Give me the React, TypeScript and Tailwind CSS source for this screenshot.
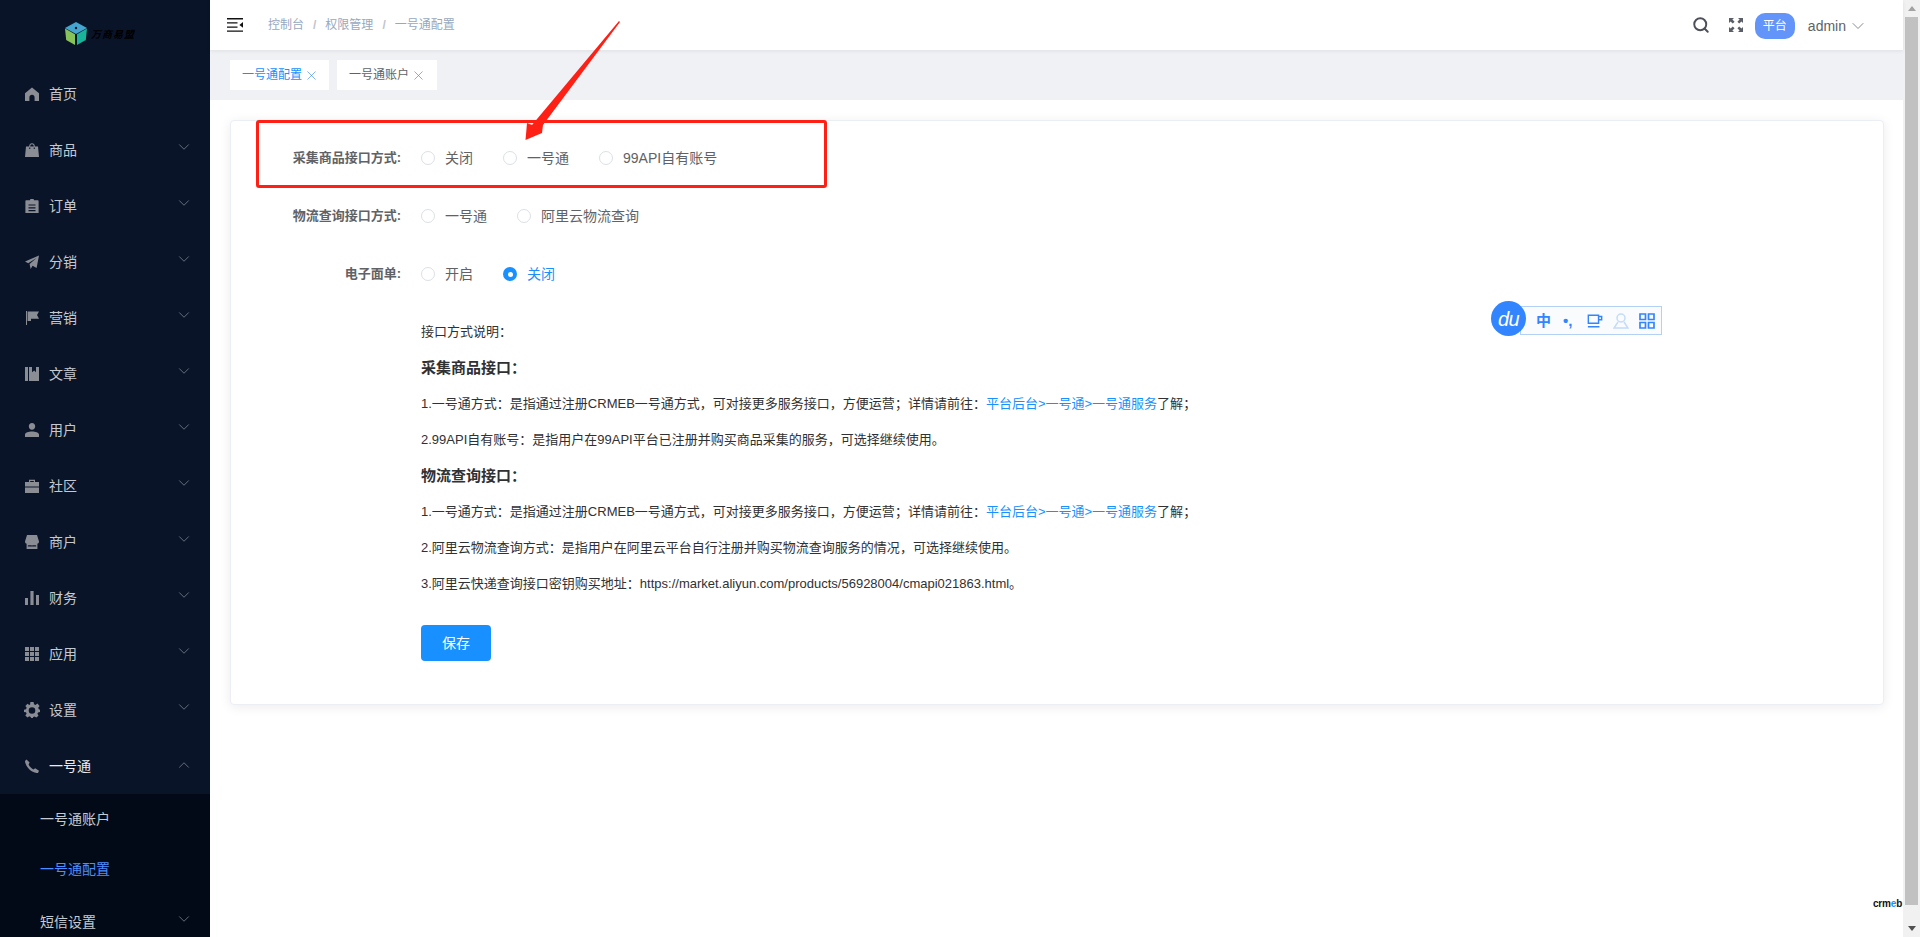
import { ChevronDown, ChevronUp, Search, X } from 'lucide-react';
import type { ReactNode } from 'react';

const icon = (children: ReactNode) => (
  <svg viewBox="0 0 14 14" className="h-[14px] w-[14px] shrink-0" fill="#8b8d95">
    {children}
  </svg>
);

const menu: { label: string; icon: ReactNode; arrow?: boolean }[] = [
  { label: '首页', icon: icon(<path d="M7 0.5 14 6.2V14H9.6V10.5C9.6 8.8 8.5 7.8 7 7.8S4.4 8.8 4.4 10.5V14H0V6.2Z" />) },
  {
    label: '商品',
    arrow: true,
    icon: icon(<path d="M4.2 3.6V3C4.2 1.3 5.4.2 7 .2S9.8 1.3 9.8 3V3.6H13L14 14H0L1 3.6ZM5.3 3.6H8.7V3C8.7 2 8 1.3 7 1.3S5.3 2 5.3 3ZM4.2 4.6V6H5.3V4.6ZM8.7 4.6V6H9.8V4.6Z" fillRule="evenodd" />),
  },
  {
    label: '订单',
    arrow: true,
    icon: icon(<path d="M5 1.2C5 .5 5.5 0 6 0H8C8.5 0 9 .5 9 1.2H12.6C13.2 1.2 13.6 1.6 13.6 2.2V14H.4V2.2C.4 1.6.8 1.2 1.4 1.2ZM3.5 5.4V6.6H10.5V5.4ZM3.5 8.2V9.4H10.5V8.2ZM3.5 11V12.2H10.5V11Z" fillRule="evenodd" />),
  },
  { label: '分销', arrow: true, icon: icon(<path d="M14 .4 11.6 13 7.6 10.7 5.6 14 4.6 9 11.5 3 3.2 8.2 0 6.4Z" />) },
  { label: '营销', arrow: true, icon: icon(<path d="M1 0H2V14H1ZM2.6.6H14L12 4 14 7.8H6V10H2.6Z" />) },
  { label: '文章', arrow: true, icon: icon(<path d="M0 0H3V14H0ZM4 0H7V5.2L9.2 3.6 11 5.2V0H14V14H4Z" />) },
  { label: '用户', arrow: true, icon: icon(<path d="M7 0C8.9 0 10.2 1.4 10.2 3.3S8.9 6.8 7 6.8 3.8 5.2 3.8 3.3 5.1 0 7 0ZM7 8.4C10.4 8.4 14 9.6 14 11.6V14H0V11.6C0 9.6 3.6 8.4 7 8.4Z" />) },
  {
    label: '社区',
    arrow: true,
    icon: icon(<path d="M4 3V.8H10V3H14V7.4H0V3ZM5.2 3H8.8V1.9H5.2ZM0 8.4H14V14H0Z" fillRule="evenodd" />),
  },
  {
    label: '商户',
    arrow: true,
    icon: icon(<path d="M2 0H12L14 6.6C14 8 13 8.8 12.4 8.8V14H1.6V8.8C1 8.8 0 8 0 6.6ZM2.8 10.6 2.8 11.6H11.2V10.6C9.6 9.8 8.6 10.4 7 10.4S4.4 9.8 2.8 10.6Z" fillRule="evenodd" />),
  },
  { label: '财务', arrow: true, icon: icon(<path d="M0 7H3V14H0ZM5.4 0H8.6V14H5.4ZM11 4H14V14H11Z" />) },
  {
    label: '应用',
    arrow: true,
    icon: icon(<path d="M0 0H4V4H0ZM5 0H9V4H5ZM10 0H14V4H10ZM0 5H4V9H0ZM5 5H9V9H5ZM10 5H14V9H10ZM0 10H4V14H0ZM5 10H9V14H5ZM10 10H14V14H10Z" />),
  },
  {
    label: '设置',
    arrow: true,
    icon: (
      <svg viewBox="0 0 16 16" className="ml-[-1px] h-4 w-4 shrink-0 mr-[-1px]" fill="#8b8d95">
        <path
          fillRule="evenodd"
          d="M6.4 0H9.6L10 2.2 11.5 2.9 13.4 1.6 15.6 4 14.2 5.8 14.8 7.3 16 7.7V10L14 10.4 13.4 11.8 14.5 13.7 12.3 15.6 10.5 14.4 9.2 15 8.9 16H7.1L6.7 15 5.3 14.3 3.5 15.6 1.3 13.6 2.6 11.7 2 10.3 0 10V7.7L2 7.3 2.7 5.8 1.4 4 3.5 1.7 5.3 2.9 6.1 2.4ZM8 5.2A3.3 3.3 0 1 0 8 11.8 3.3 3.3 0 1 0 8 5.2Z"
        />
      </svg>
    ),
  },
];

const Radio = ({ label, checked }: { label: string; checked?: boolean }) => (
  <label className={`mr-[30px] flex items-center text-[14px] ${checked ? 'text-[#1890ff]' : 'text-[#606266]'}`}>
    {checked ? (
      <span className="mr-[10px] flex h-[14px] w-[14px] items-center justify-center rounded-full bg-[#1890ff]">
        <span className="h-[5px] w-[5px] rounded-full bg-white" />
      </span>
    ) : (
      <span className="mr-[10px] h-[14px] w-[14px] rounded-full border border-[#dcdfe6] bg-white" />
    )}
    {label}
  </label>
);

const FormRow = ({ label, children }: { label: string; children: ReactNode }) => (
  <div className="flex h-[58px] items-center">
    <div className="w-[170px] text-right text-[13px] font-bold text-[#606266]">{label}</div>
    <div className="ml-5 flex items-center">{children}</div>
  </div>
);

const Line = ({ children, bold }: { children: ReactNode; bold?: boolean }) => (
  <div className={`flex h-9 items-center ${bold ? 'text-[15px] font-bold text-[#303133]' : 'text-[13px] text-[#303133]'}`}>
    <span>{children}</span>
  </div>
);

const Arrow = () => <ChevronDown className="mb-[6px] h-[18px] w-[18px] text-[#6f7683]" strokeWidth={1.2} />;

const servicesLink = <span className="text-[#1890ff]">平台后台&gt;一号通&gt;一号通服务</span>;

// fullwidth punctuation used in the description text
const colon = '\uFF1A';
const comma = '\uFF0C';
const semi = '\uFF1B';

const serviceLine = (
  <Line>
    1.一号通方式{colon}是指通过注册CRMEB一号通方式{comma}可对接更多服务接口{comma}方便运营{semi}详情请前往{colon}
    {servicesLink}了解{semi}
  </Line>
);

export default function App() {
  return (
    <div className="relative flex h-[937px] w-[1920px] overflow-hidden bg-white font-['Liberation_Sans','Noto_Sans_CJK_SC',sans-serif]">
      {/* sidebar */}
      <aside className="flex w-[210px] shrink-0 flex-col bg-[#0a1429]">
        <div className="flex h-[66px] shrink-0 items-start pl-[65px] pt-[22px]">
          <svg viewBox="0 0 22 23" className="h-[23px] w-[22px]">
            <path d="M11 0 22 6 11 12 0 6Z" fill="#44a5cf" />
            <path d="M0 6.5 10 12.2V23L1.2 18Z" fill="#86c35a" />
            <path d="M22 6.5 12 12.2V23L20.8 18Z" fill="#19b39a" />
            <circle cx="11" cy="6" r="1.2" fill="#0a1429" />
          </svg>
          <span className="ml-1 mt-[5px] whitespace-nowrap text-[10px] font-bold italic tracking-[1px] text-black">万商易盟</span>
        </div>
        {menu.map((m) => (
          <div key={m.label} className="flex h-14 shrink-0 items-center pl-[25px] pr-[17px] text-[14px] text-[#c5cad1]">
            {m.icon}
            <span className="ml-[10px] flex-1">{m.label}</span>
            {m.arrow && <Arrow />}
          </div>
        ))}
        <div className="flex h-14 shrink-0 items-center pl-[25px] pr-[17px] text-[14px] text-[#e8ebef]">
          {icon(<path d="M1.5 0.5 4.6 3.6 3.6 5.6C4.4 7.4 6.4 9.6 8.4 10.4L10.2 9.2 14 11.8 13 14C7 14.5 .2 7.5 0 2Z" />)}
          <span className="ml-[10px] flex-1">一号通</span>
          <ChevronUp className="mb-[2px] h-[18px] w-[18px] text-[#6f7683]" strokeWidth={1.2} />
        </div>
        <div className="flex-1 bg-[#030a17] text-[14px] text-[#c5cad1]">
          <div className="flex h-[50px] items-center pl-10">一号通账户</div>
          <div className="flex h-[50px] items-center pl-10 text-[#4c8dff]">一号通配置</div>
          <div className="flex h-14 items-center pl-10 pr-[17px]">
            <span className="flex-1">短信设置</span>
            <Arrow />
          </div>
        </div>
      </aside>

      {/* main */}
      <main className="flex min-w-0 flex-1 flex-col">
        <header className="relative z-10 flex h-[50px] shrink-0 items-center bg-white pl-[17px] pr-[35px] shadow-[0_1px_4px_rgba(0,21,41,0.08)]">
          <svg viewBox="0 0 16 14" className="h-[14px] w-4">
            <path d="M0 0H16V1.4H0ZM0 4.2H10.5V5.6H0ZM0 8.4H10.5V9.8H0ZM0 12.4H16V13.8H0ZM16 4 12.4 6.9 16 9.8Z" fill="#111" />
          </svg>
          <nav className="ml-[25px] flex items-center text-[12px] text-[#97a8be]">
            <span>控制台</span>
            <span className="mx-[9px] font-bold text-[#c0c4cc]">/</span>
            <span>权限管理</span>
            <span className="mx-[9px] font-bold text-[#c0c4cc]">/</span>
            <span>一号通配置</span>
          </nav>
          <div className="ml-auto flex items-center">
            <Search className="h-[18px] w-[18px] text-[#4d5058]" strokeWidth={2.6} />
            <svg viewBox="0 0 14 14" className="ml-[19px] h-[14px] w-[14px]" fill="#5a5e66">
              <path d="M0 0H5L3.4 1.6 5.6 3.8 3.8 5.6 1.6 3.4 0 5ZM14 0V5L12.4 3.4 10.2 5.6 8.4 3.8 10.6 1.6 9 0ZM0 14V9L1.6 10.6 3.8 8.4 5.6 10.2 3.4 12.4 5 14ZM14 14H9L10.6 12.4 8.4 10.2 10.2 8.4 12.4 10.6 14 9Z" />
            </svg>
            <div className="ml-3 mt-[2px] flex h-[26px] w-10 items-center justify-center rounded-[10px] bg-[#6394f9] text-[12px] text-white">平台</div>
            <span className="ml-[13px] mt-[2px] text-[14px] text-[#606266]">admin</span>
            <ChevronDown className="ml-[2px] mt-[2px] h-5 w-5 text-[#7d8087]" strokeWidth={1.1} />
          </div>
        </header>

        <div className="flex h-[50px] shrink-0 items-center gap-2 bg-[#f0f1f5] pl-5">
          <div className="flex h-[30px] w-[99px] items-center bg-white pl-3 text-[12px] text-[#1890ff]">
            一号通配置
            <X className="ml-[2px] h-[15px] w-[15px] text-[#4c8dff]" strokeWidth={1.1} />
          </div>
          <div className="flex h-[30px] w-[100px] items-center bg-white pl-3 text-[12px] text-[#606266]">
            一号通账户
            <X className="ml-[2px] h-[15px] w-[15px] text-[#808288]" strokeWidth={1.1} />
          </div>
        </div>

        <div className="flex-1 pl-5 pr-[19px] pt-5">
          <div className="rounded border border-[#ebeef5] bg-white pb-[43px] pt-2 shadow-[0_2px_12px_rgba(0,0,0,0.08)]">
            <FormRow label="采集商品接口方式:">
              <Radio label="关闭" />
              <Radio label="一号通" />
              <Radio label="99API自有账号" />
            </FormRow>
            <FormRow label="物流查询接口方式:">
              <Radio label="一号通" />
              <Radio label="阿里云物流查询" />
            </FormRow>
            <FormRow label="电子面单:">
              <Radio label="开启" />
              <Radio label="关闭" checked />
            </FormRow>
            <div className="ml-[190px] mt-[11px]">
              <Line>接口方式说明{colon}</Line>
              <Line bold>采集商品接口{colon}</Line>
              {serviceLine}
              <Line>2.99API自有账号{colon}是指用户在99API平台已注册并购买商品采集的服务{comma}可选择继续使用。</Line>
              <Line bold>物流查询接口{colon}</Line>
              {serviceLine}
              <Line>2.阿里云物流查询方式{colon}是指用户在阿里云平台自行注册并购买物流查询服务的情况{comma}可选择继续使用。</Line>
              <Line>3.阿里云快递查询接口密钥购买地址{colon}https://market.aliyun.com/products/56928004/cmapi021863.html。</Line>
              <button className="mt-[23px] h-9 w-[70px] rounded-[4px] bg-[#1890ff] text-[14px] text-white">保存</button>
            </div>
          </div>
        </div>
      </main>

      {/* browser scrollbar */}
      <div className="flex w-[17px] shrink-0 flex-col items-center bg-[#f1f1f1]">
        <div className="flex h-[17px] items-center justify-center">
          <div className="h-0 w-0 border-x-[4px] border-b-[5px] border-x-transparent border-b-[#a3a3a3]" />
        </div>
        <div className="h-[888px] w-[13px] bg-[#c1c1c1]" />
        <div className="flex flex-1 items-end justify-center pb-[6px]">
          <div className="h-0 w-0 border-x-[4px] border-t-[5px] border-x-transparent border-t-[#505050]" />
        </div>
      </div>

      {/* annotation drawn over the page */}
      <div className="absolute z-20 left-[256px] top-[120px] h-[68px] w-[571px] rounded-[3px] border-[3px] border-[#ff2015]" />
      <svg className="absolute z-20 left-[520px] top-[15px] h-[130px] w-[105px]" viewBox="520 15 105 130">
        <path d="M619 21 620 22 543 125 542 133 525.5 140 527 123 532 125Z" fill="#ff2015" />
      </svg>

      {/* input method bar */}
      <div className="absolute z-20 left-[1491px] top-[301px] flex items-start">
        <div className="z-10 flex h-[35px] w-[35px] items-center justify-center rounded-full bg-[#3385ff] text-[20px] font-medium italic tracking-tight text-white">du</div>
        <div className="ml-[-6px] mt-[5px] flex h-[29px] w-[142px] items-center border border-[#b3d1f5] bg-[#f9fbfd] pl-[15px] text-[#3385ff]">
          <span className="w-[15px] text-[15px] font-bold leading-none">中</span>
          <span className="ml-3 w-3 text-[15px] font-bold leading-none">•,</span>
          <svg viewBox="0 0 18 16" className="ml-3 h-4 w-4" fill="none" stroke="#3385ff" strokeWidth="1.6">
            <path d="M1.5 1.5H13V10.5H1.5ZM13 3H16.5V6.5H13M1 14.5H14" />
          </svg>
          <svg viewBox="0 0 16 16" className="ml-[10px] h-4 w-4" fill="none" stroke="#c4dbfa" strokeWidth="1.5">
            <circle cx="8" cy="5" r="4" />
            <path d="M5 9 1 15H15L11 9" />
          </svg>
          <svg viewBox="0 0 16 16" className="ml-[10px] h-4 w-4" fill="none" stroke="#3385ff" strokeWidth="1.7">
            <path d="M1 1H6.5V6.5H1ZM9.5 1H15V6.5H9.5ZM1 9.5H6.5V15H1ZM9.5 9.5H15V15H9.5Z" />
          </svg>
        </div>
      </div>

      {/* bottom corner mark */}
      <div className="absolute left-[1873px] top-[899px] text-[10px] font-bold leading-none tracking-[-0.2px] text-[#111]">
        crm<span className="text-[#1890ff]">e</span>b
      </div>
    </div>
  );
}
